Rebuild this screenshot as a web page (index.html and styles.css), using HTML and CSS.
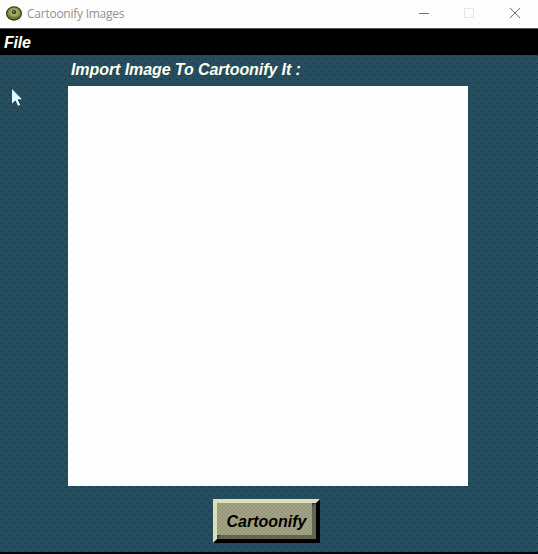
FILE: index.html
```html
<!DOCTYPE html>
<html lang="en">
<head>
<meta charset="utf-8">
<title>Cartoonify Images</title>
<link rel="stylesheet" href="styles.css">
</head>
<body>
<div class="window">
  <header class="titlebar">
    <svg class="logo" viewBox="0 0 16 15"><ellipse cx="8" cy="7.5" rx="8" ry="7.2" fill="#2c2c1c"/><ellipse cx="8" cy="7.2" rx="6.8" ry="6" fill="#8a9038"/><ellipse cx="8" cy="6.3" rx="4.8" ry="4" fill="#a5a568"/><circle cx="8" cy="6" r="2.1" fill="#25301c"/><circle cx="7.8" cy="5.7" r=".8" fill="#d5d5aa"/><path d="M3 10Q8 14 13 10" fill="none" stroke="#64691f"/></svg>
    <h1 class="title">Cartoonify Images</h1>
    <div class="controls">
      <svg viewBox="0 0 46 28"><path d="M11 13.5h10" stroke="#77775f"/></svg>
      <svg viewBox="0 0 46 28"><path d="M10.5 8.5h9v9h-9z" fill="none" stroke="#c8c8e4" stroke-dasharray="1 1"/></svg>
      <svg viewBox="0 0 46 28"><path d="M10 8l10 10M20 8L10 18" stroke="#74746c"/></svg>
    </div>
  </header>
  <nav class="menubar"><span>File</span></nav>
  <main class="content">
    <p class="prompt">Import Image To Cartoonify It :</p>
    <div class="canvas"></div>
    <button class="action"><span>Cartoonify</span></button>
  </main>
  <svg class="cursor" viewBox="0 0 14 22"><path d="M1.5 1v16.5l3.8-3.5 2.5 5.5 3-1.4-2.6-5.3h4.8z" fill="#e0f8ff" stroke="#132f45" stroke-width=".8"/></svg>
</div>
</body>
</html>
```
FILE: styles.css
```css
* { box-sizing: border-box; }
body { margin: 0; overflow: hidden; }
.window {
  position: relative;
  display: flex;
  flex-direction: column;
  width: 538px;
  height: 554px;
  border-bottom: 2px solid #02060b;
  background: #254b5d;
  font-family: "Liberation Sans", Arial, sans-serif;
}
.titlebar,
.canvas {
  background:
    linear-gradient(#fdfdfd 7px, transparent 0) 0 0 / 8px 8px,
    linear-gradient(90deg, #fdfdfd 7px, #ffff70 0) 0 0 / 8px 8px,
    #fdfdfd;
}
.titlebar {
  display: flex;
  align-items: center;
  height: 29px;
  padding-left: 6px;
  border-bottom: 1px solid #555;
}
.logo { width: 16px; height: 15px; margin-top: -2px; }
.title {
  margin: 0 0 0 5px;
  color: #92928f;
  font: 400 12px/20px "Open Sans", sans-serif;
  letter-spacing: -.25px;
}
.controls { display: flex; margin: 0 -8px 0 auto; }
.controls svg { width: 46px; height: 28px; }
.menubar {
  height: 26px;
  padding-left: 4px;
  background: #000;
  color: #fffff0;
  font: italic bold 16px/27px "Liberation Sans", Arial, sans-serif;
  letter-spacing: -.2px;
}
.content {
  display: flex;
  flex: 1;
  flex-direction: column;
  align-items: center;
  background:
    conic-gradient(from 90deg at 7px 7px, #102548 90deg, transparent 0) 2px 1px / 8px 8px,
    conic-gradient(from 90deg at 7px 7px, #102548 90deg, transparent 0) 6px 5px / 8px 8px,
    conic-gradient(#254b62 25%, #264f5a 0 50%, #254b62 0 75%, #264f5a 0) 0 0 / 4px 4px,
    #254b5d;
}
.prompt {
  width: 400px;
  height: 31px;
  margin: 0 2px 0 0;
  padding-left: 3px;
  color: #fffff0;
  font: italic bold 16px/30px "Liberation Sans", Arial, sans-serif;
  letter-spacing: -.08px;
}
.canvas {
  width: 400px;
  height: 400px;
  margin-right: 2px;
}
.action {
  width: 107px;
  height: 44px;
  margin: 13px 5px 0 0;
  padding: 0;
  border: 4px solid;
  border-color: #dedeb8 #000 #000 #dedeb8;
  background: #9b9b80;
  color: #000;
  font: italic bold 16px/36px "Liberation Sans", Arial, sans-serif;
}
.action span {
  display: block;
  height: 36px;
  border: 4px solid;
  border-color: transparent #646452 #646452 transparent;
  background: conic-gradient(#a5a57c 25%, #969682 0 50%, #a5a57c 0 75%, #969682 0) 0 0 / 4px 4px;
  line-height: 29px;
}
.cursor { position: absolute; top: 87px; left: 10px; width: 14px; height: 22px; }
```
